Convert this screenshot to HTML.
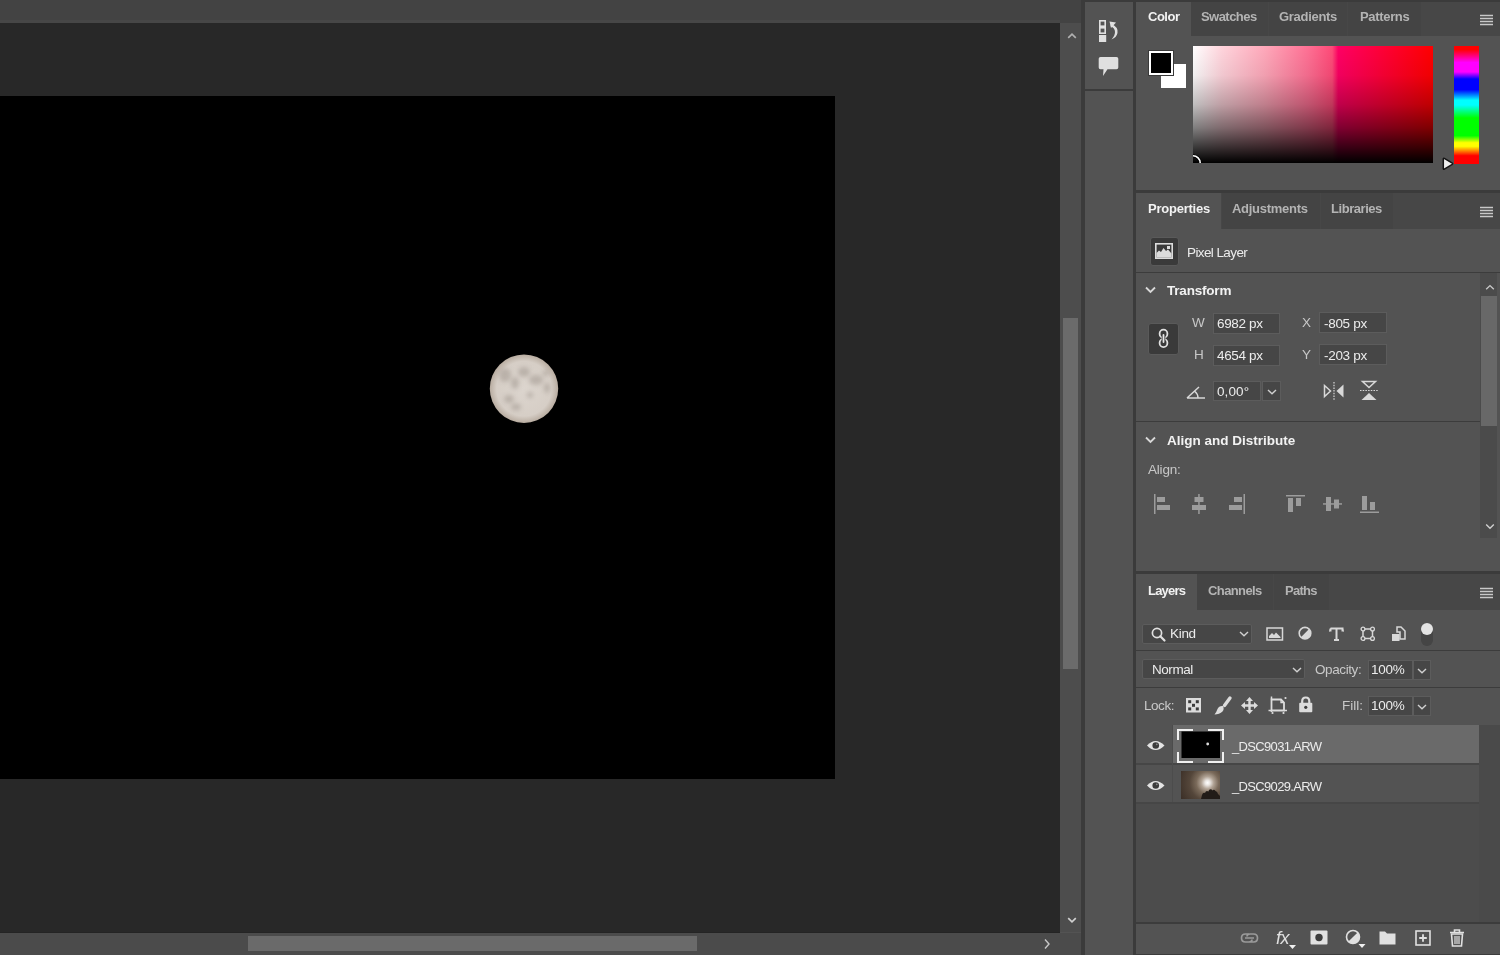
<!DOCTYPE html>
<html><head><meta charset="utf-8">
<style>
*{margin:0;padding:0;box-sizing:border-box}
html,body{width:1500px;height:955px;overflow:hidden;background:#535353;font-family:"Liberation Sans",sans-serif;}
.a{position:absolute}
.t{position:absolute;white-space:nowrap;line-height:1;font-size:13.5px;color:#ececec}
.hd{position:absolute;white-space:nowrap;line-height:1;font-size:13.5px;font-weight:bold;color:#f2f2f2}
.tab{position:absolute;white-space:nowrap;line-height:1;font-size:13px;letter-spacing:-0.25px;font-weight:bold;color:#b4b4b4}
.act{color:#f2f2f2}
.fld{position:absolute;background:#464646;border:1px solid #5c5c5c}
.ln{position:absolute;background:#3c3c3c}
svg{position:absolute;overflow:visible}
.t,.tab,.hd{will-change:transform}
</style></head><body>
<!-- ============ document area ============ -->
<div class="a" style="left:0;top:0;width:1081px;height:23px;background:#434343"></div><div class="a" style="left:0;top:20px;width:1060px;height:3px;background:#474747"></div>
<div class="a" style="left:0;top:23px;width:1060px;height:909px;background:#282828"></div>
<div class="a" style="left:0;top:96px;width:835px;height:683px;background:#000"></div>
<!-- moon -->
<svg style="left:480px;top:345px" width="88" height="88">
 <defs><filter id="bl" x="-50%" y="-50%" width="200%" height="200%"><feGaussianBlur stdDeviation="2.2"/></filter>
 <filter id="bl2"><feGaussianBlur stdDeviation="0.6"/></filter>
 <clipPath id="mc"><circle cx="44" cy="43.7" r="34.2"/></clipPath>
 <radialGradient id="mg" cx="50%" cy="50%" r="50%"><stop offset="0" stop-color="#dcd5ce"/><stop offset="0.8" stop-color="#d6cec6"/><stop offset="1" stop-color="#b8aca0"/></radialGradient></defs>
 <g filter="url(#bl2)">
 <circle cx="44" cy="43.7" r="34.2" fill="url(#mg)"/>
 <g clip-path="url(#mc)" filter="url(#bl)" fill="#a39a92" opacity="0.55">
  <ellipse cx="44" cy="27" rx="6" ry="5"/>
  <ellipse cx="56" cy="35" rx="7" ry="5"/>
  <ellipse cx="25" cy="30" rx="6" ry="7"/>
  <ellipse cx="35" cy="38" rx="4" ry="6"/>
  <ellipse cx="29" cy="54" rx="5" ry="4"/>
  <ellipse cx="36" cy="62" rx="5" ry="3.5"/>
  <ellipse cx="66" cy="28" rx="3" ry="3"/>
  <ellipse cx="67" cy="43" rx="3" ry="5"/>
  <ellipse cx="50" cy="50" rx="3" ry="3"/>
 </g>
 </g>
</svg>
<!-- vertical scrollbar -->
<div class="a" style="left:1060px;top:23px;width:21px;height:909px;background:#4d4d4d"></div>
<div class="a" style="left:1063px;top:318px;width:15px;height:351px;background:#6b6b6b"></div>
<!-- horizontal scrollbar -->
<div class="a" style="left:0;top:932px;width:1060px;height:1px;background:#242424"></div><div class="a" style="left:0;top:933px;width:1081px;height:22px;background:#4b4b4b"></div>
<div class="a" style="left:248px;top:936px;width:449px;height:15px;background:#6a6a6a"></div>
<!-- separators -->
<div class="a" style="left:1081px;top:0;width:4px;height:955px;background:#3b3b3b"></div>
<div class="a" style="left:1133px;top:0;width:3px;height:955px;background:#3b3b3b"></div>
<!-- toolbar column -->
<div class="a" style="left:1085px;top:0;width:48px;height:2px;background:#3b3b3b"></div>
<div class="a" style="left:1085px;top:89px;width:48px;height:2px;background:#3b3b3b"></div>

<!-- ============ right panels ============ -->
<div class="a" style="left:1136px;top:0;width:364px;height:2px;background:#3b3b3b"></div>
<!-- Color tab bar -->
<div class="a" style="left:1136px;top:2px;width:364px;height:34px;background:#474747"></div>
<div class="a" style="left:1136px;top:2px;width:55px;height:36px;background:#535353"></div>
<div class="a" style="left:1191px;top:2px;width:77px;height:34px;background:#444444"></div>
<div class="a" style="left:1269px;top:2px;width:78px;height:34px;background:#444444"></div>
<div class="a" style="left:1348px;top:2px;width:73px;height:34px;background:#444444"></div>
<span class="tab act" style="left:1148px;top:10px;letter-spacing:-0.5px">Color</span>
<span class="tab" style="left:1201px;top:10px;letter-spacing:-0.55px">Swatches</span>
<span class="tab" style="left:1279px;top:10px;letter-spacing:-0.3px">Gradients</span>
<span class="tab" style="left:1360px;top:10px;letter-spacing:-0.33px">Patterns</span>
<!-- Color section bottom -->
<div class="a" style="left:1136px;top:190px;width:364px;height:3px;background:#3b3b3b"></div>

<!-- Properties tab bar -->
<div class="a" style="left:1136px;top:193px;width:364px;height:36px;background:#474747"></div>
<div class="a" style="left:1136px;top:193px;width:85px;height:38px;background:#535353"></div>
<div class="a" style="left:1222px;top:193px;width:98px;height:36px;background:#444444"></div>
<div class="a" style="left:1321px;top:193px;width:72px;height:36px;background:#444444"></div>
<span class="tab act" style="left:1148px;top:202px;letter-spacing:-0.23px">Properties</span>
<span class="tab" style="left:1232px;top:202px;letter-spacing:-0.28px">Adjustments</span>
<span class="tab" style="left:1331px;top:202px;letter-spacing:-0.45px">Libraries</span>
<div class="ln" style="left:1136px;top:272px;width:364px;height:1px"></div>
<div class="ln" style="left:1136px;top:421px;width:344px;height:1px"></div>
<!-- align section bottom -->
<div class="a" style="left:1136px;top:571px;width:364px;height:3px;background:#3b3b3b"></div>

<!-- Layers tab bar -->
<div class="a" style="left:1136px;top:574px;width:364px;height:36px;background:#474747"></div>
<div class="a" style="left:1136px;top:574px;width:61px;height:38px;background:#535353"></div>
<div class="a" style="left:1197px;top:574px;width:76px;height:36px;background:#444444"></div>
<div class="a" style="left:1274px;top:574px;width:55px;height:36px;background:#444444"></div>
<span class="tab act" style="left:1148px;top:584px;letter-spacing:-0.8px">Layers</span>
<span class="tab" style="left:1208px;top:584px;letter-spacing:-0.6px">Channels</span>
<span class="tab" style="left:1285px;top:584px;letter-spacing:-0.75px">Paths</span>
<div class="ln" style="left:1136px;top:650px;width:364px;height:1px"></div>
<div class="ln" style="left:1136px;top:687px;width:364px;height:1px"></div>
<div class="ln" style="left:1136px;top:922px;width:364px;height:2px"></div><div class="ln" style="left:1136px;top:954px;width:364px;height:1px"></div>

<!-- ====== Color panel content ====== -->
<div class="a" style="left:1161px;top:64px;width:25px;height:24px;background:#fff"></div>
<div class="a" style="left:1148px;top:50px;width:26px;height:26px;background:#3a3a3a"></div>
<div class="a" style="left:1149px;top:51px;width:24px;height:24px;background:#fff"></div>
<div class="a" style="left:1151px;top:53px;width:20px;height:20px;background:#000"></div>
<div class="a" style="left:1193px;top:46px;width:240px;height:117px;background:linear-gradient(to bottom,rgba(0,0,0,0) 0%,rgba(0,0,0,0.06) 25%,rgba(0,0,0,0.25) 50%,rgba(0,0,0,0.5) 70%,rgba(0,0,0,0.75) 85%,#000 100%),linear-gradient(to right,#ffffff 0%,#ffd4dc 12%,#ffa8ba 30%,#ff7094 48%,#ff4a78 58%,#ff0064 60.5%,#ff0040 75%,#ff0000 100%)"></div>
<svg style="left:1193px;top:154px" width="10" height="9"><path d="M0 1.8 A7.2 7.2 0 0 1 7.2 9" stroke="#000" stroke-width="3" fill="none"/><path d="M0 1.8 A7.2 7.2 0 0 1 7.2 9" stroke="#fff" stroke-width="1.6" fill="none"/></svg>
<div class="a" style="left:1454px;top:46px;width:25px;height:118px;background:linear-gradient(to bottom,#ff0000 0%,#ff0000 3%,#ff00ff 14%,#ff00ff 22%,#0000ff 28%,#0000ff 37%,#00ffff 46%,#00ffff 50%,#00ff00 61%,#00ff00 76%,#ffff00 82%,#ffff00 85%,#ff8000 89%,#ff0000 93%,#ff0000 100%)"></div>
<svg style="left:1441px;top:156px" width="14" height="15"><path d="M2.3 3 Q2.3 2 3.3 2.4 L11.3 7.2 Q12 7.8 11.3 8.4 L3.3 13.2 Q2.3 13.6 2.3 12.6 Z" fill="#f0f0f0" stroke="#141414" stroke-width="1.5" stroke-linejoin="round"/></svg>
<!-- panel menus -->
<svg style="left:1480px;top:14px" width="13" height="12"><path d="M0 1.5H13M0 4.5H13M0 7.5H13M0 10.5H13" stroke="#c8c8c8" stroke-width="1.4"/></svg>
<svg style="left:1480px;top:206px" width="13" height="12"><path d="M0 1.5H13M0 4.5H13M0 7.5H13M0 10.5H13" stroke="#c8c8c8" stroke-width="1.4"/></svg>
<svg style="left:1480px;top:587px" width="13" height="12"><path d="M0 1.5H13M0 4.5H13M0 7.5H13M0 10.5H13" stroke="#c8c8c8" stroke-width="1.4"/></svg>

<!-- toolbar icons -->
<svg style="left:1098px;top:19px" width="22" height="24">
 <rect x="1.8" y="1.8" width="5.4" height="5.4" fill="none" stroke="#e0e0e0" stroke-width="1.6"/>
 <rect x="1.8" y="8.8" width="5.4" height="5.4" fill="none" stroke="#e0e0e0" stroke-width="1.6"/>
 <rect x="1" y="16" width="7.2" height="7" fill="#e0e0e0"/>
 <path d="M13.5 5 Q20.5 8 19.5 14 Q18.5 18.5 13.5 20.5 Q17 16.5 17 13 Q17 9 12.5 7Z" fill="#e0e0e0"/>
 <path d="M11.5 2.5 L18 3.5 L13 9 Z" fill="#e0e0e0"/>
</svg>
<svg style="left:1098px;top:56px" width="22" height="22"><path d="M2.5 1 H18.5 Q20.3 1 20.3 2.8 V11.5 Q20.3 13.3 18.5 13.3 H9.5 L5 20 L5.5 13.3 H2.5 Q0.7 13.3 0.7 11.5 V2.8 Q0.7 1 2.5 1Z" fill="#e0e0e0"/></svg>
<!-- doc scroll arrows -->
<svg style="left:1067px;top:32px" width="10" height="8"><path d="M1.2 5.8 L5 2.2 L8.8 5.8" stroke="#b0b0b0" stroke-width="1.7" fill="none"/></svg>
<svg style="left:1067px;top:916px" width="10" height="8"><path d="M1.2 2.2 L5 5.8 L8.8 2.2" stroke="#d0d0d0" stroke-width="1.7" fill="none"/></svg>
<svg style="left:1043px;top:938px" width="8" height="12"><path d="M2 1.5 L6 6 L2 10.5" stroke="#c8c8c8" stroke-width="1.4" fill="none"/></svg>

<!-- ====== Properties content ====== -->
<div class="a" style="left:1150px;top:237px;width:29px;height:29px;background:#3a3a3a;border:1px solid #5a5a5a;border-radius:3px"></div>
<svg style="left:1154px;top:242px" width="20" height="18">
 <rect x="1.8" y="1.8" width="16.4" height="14.4" fill="none" stroke="#dcdcdc" stroke-width="1.6"/>
 <path d="M2.5 15.5 L2.5 11 L5 8.5 L7 10 L9.5 6 L12 9 L14 7.5 L17.5 11.5 L17.5 15.5Z" fill="#dcdcdc"/>
 <rect x="13" y="4" width="3" height="3" fill="#dcdcdc"/>
</svg>
<span class="t" style="left:1187px;top:246px;letter-spacing:-0.6px">Pixel Layer</span>

<svg style="left:1145px;top:286px" width="12" height="9"><path d="M1 1.5 L5.5 6 L10 1.5" stroke="#d8d8d8" stroke-width="1.8" fill="none"/></svg>
<span class="hd" style="left:1167px;top:284px;letter-spacing:-0.2px">Transform</span>
<div class="a" style="left:1148px;top:323px;width:31px;height:32px;background:#3a3a3a;border:1px solid #5a5a5a;border-radius:3px"></div>
<svg style="left:1156px;top:327px" width="16" height="24"><ellipse cx="7.5" cy="6.8" rx="3.9" ry="4.1" fill="none" stroke="#e0e0e0" stroke-width="1.8"/><ellipse cx="7.5" cy="16" rx="3.9" ry="4.1" fill="none" stroke="#e0e0e0" stroke-width="1.8"/><path d="M7.5 7.5 V15.5" stroke="#3a3a3a" stroke-width="3.6"/><path d="M7.5 8 V15" stroke="#e8e8e8" stroke-width="1.8" stroke-linecap="round"/></svg>

<span class="t" style="left:1192px;top:316px;color:#c8c8c8">W</span>
<div class="fld" style="left:1213px;top:313px;width:67px;height:21px"></div>
<span class="t" style="left:1217px;top:317px;letter-spacing:-0.35px">6982 px</span>
<span class="t" style="left:1194px;top:348px;color:#c8c8c8">H</span>
<div class="fld" style="left:1213px;top:345px;width:67px;height:21px"></div>
<span class="t" style="left:1217px;top:349px;letter-spacing:-0.35px">4654 px</span>
<span class="t" style="left:1302px;top:316px;color:#c8c8c8">X</span>
<div class="fld" style="left:1319px;top:312px;width:68px;height:21px"></div>
<span class="t" style="left:1324px;top:317px;letter-spacing:-0.3px">-805 px</span>
<span class="t" style="left:1302px;top:348px;color:#c8c8c8">Y</span>
<div class="fld" style="left:1319px;top:344px;width:68px;height:21px"></div>
<span class="t" style="left:1324px;top:349px;letter-spacing:-0.3px">-203 px</span>

<svg style="left:1186px;top:385px" width="20" height="14"><path d="M1 13 H19 M1 13 L13 2 M12 13 Q12 9 9 6.5" stroke="#d8d8d8" stroke-width="1.5" fill="none"/></svg>
<div class="fld" style="left:1213px;top:381px;width:48px;height:20px"></div>
<div class="fld" style="left:1262px;top:381px;width:19px;height:20px"></div>
<span class="t" style="left:1217px;top:385px;letter-spacing:0.1px">0,00°</span>
<svg style="left:1266px;top:388px" width="12" height="8"><path d="M2 2 L6 5.8 L10 2" stroke="#d0d0d0" stroke-width="1.4" fill="none"/></svg>
<svg style="left:1323px;top:382px" width="22" height="18"><path d="M1.5 3.5 L7.5 9 L1.5 14.5Z" fill="none" stroke="#d8d8d8" stroke-width="1.5"/><path d="M20.5 2.5 L13.5 9 L20.5 15.5Z" fill="#d8d8d8"/><path d="M11 0 V18" stroke="#d8d8d8" stroke-width="1.2" stroke-dasharray="1.5 1.2"/></svg>
<svg style="left:1360px;top:380px" width="18" height="21"><path d="M2.5 1.5 H15.5 L9 7.5Z" fill="none" stroke="#d8d8d8" stroke-width="1.5"/><path d="M1.5 20 H16.5 L9 13Z" fill="#d8d8d8"/><path d="M0 10.5 H18" stroke="#d8d8d8" stroke-width="1.2" stroke-dasharray="1.5 1.2"/></svg>

<!-- panel scrollbar -->
<div class="a" style="left:1480px;top:273px;width:17px;height:265px;background:#4b4b4b"></div>
<div class="a" style="left:1481px;top:296px;width:16px;height:130px;background:#686868"></div>
<svg style="left:1485px;top:284px" width="10" height="7"><path d="M1.2 5.2 L5 1.6 L8.8 5.2" stroke="#c8c8c8" stroke-width="1.4" fill="none"/></svg>
<svg style="left:1485px;top:523px" width="10" height="7"><path d="M1.2 1.6 L5 5.2 L8.8 1.6" stroke="#d0d0d0" stroke-width="1.4" fill="none"/></svg>

<svg style="left:1145px;top:436px" width="12" height="9"><path d="M1 1.5 L5.5 6 L10 1.5" stroke="#d8d8d8" stroke-width="1.8" fill="none"/></svg>
<span class="hd" style="left:1167px;top:434px">Align and Distribute</span>
<span class="t" style="left:1148px;top:463px;color:#c8c8c8;letter-spacing:-0.2px">Align:</span>
<!-- align icons -->
<svg style="left:1153px;top:494px" width="18" height="20" fill="#9c9c9c"><rect x="1" y="0" width="1.5" height="20"/><rect x="4" y="3" width="8" height="5"/><rect x="4" y="11" width="13" height="5"/></svg>
<svg style="left:1191px;top:494px" width="16" height="20" fill="#9c9c9c"><rect x="7.2" y="0" width="1.5" height="20"/><rect x="3.5" y="3" width="9" height="5"/><rect x="1" y="11" width="14" height="5"/></svg>
<svg style="left:1228px;top:494px" width="18" height="20" fill="#9c9c9c"><rect x="15.5" y="0" width="1.5" height="20"/><rect x="6" y="3" width="8" height="5"/><rect x="1" y="11" width="13" height="5"/></svg>
<svg style="left:1286px;top:494px" width="20" height="20" fill="#9c9c9c"><rect x="0" y="1" width="19" height="1.5"/><rect x="2" y="4" width="5" height="14"/><rect x="10" y="4" width="5" height="8"/></svg>
<svg style="left:1323px;top:494px" width="20" height="20" fill="#9c9c9c"><rect x="0" y="9.2" width="19" height="1.5"/><rect x="3" y="3" width="5" height="14"/><rect x="11" y="5.5" width="5" height="9"/></svg>
<svg style="left:1360px;top:494px" width="20" height="20" fill="#9c9c9c"><rect x="0" y="17.5" width="19" height="1.5"/><rect x="2" y="2" width="5" height="14"/><rect x="10" y="8" width="5" height="8"/></svg>


<!-- ====== Layers content ====== -->
<div class="fld" style="left:1142px;top:624px;width:110px;height:20px;border-radius:2px"></div>
<svg style="left:1151px;top:627px" width="15" height="15"><circle cx="6" cy="6" r="4.6" fill="none" stroke="#e0e0e0" stroke-width="1.7"/><path d="M9.3 9.3 L13.5 13.5" stroke="#e0e0e0" stroke-width="2.2" stroke-linecap="round"/></svg>
<span class="t" style="left:1170px;top:627px;letter-spacing:-0.3px">Kind</span>
<svg style="left:1238px;top:630px" width="12" height="8"><path d="M2 2 L6 5.8 L10 2" stroke="#d0d0d0" stroke-width="1.4" fill="none"/></svg>
<!-- filter icons -->
<svg style="left:1266px;top:627px" width="18" height="14"><rect x="1" y="1" width="15.5" height="12" fill="none" stroke="#d8d8d8" stroke-width="1.5"/><path d="M3 11 L3 9 L6 6 L8 8 L10 5.5 L14.5 10 L14.5 11Z" fill="#d8d8d8"/></svg>
<svg style="left:1298px;top:626px" width="15" height="15"><circle cx="7" cy="7.2" r="5.8" fill="none" stroke="#d8d8d8" stroke-width="1.6"/><path d="M11.1 3.1 A5.8 5.8 0 0 1 2.9 11.3Z" fill="#d8d8d8"/></svg>
<svg style="left:1329px;top:627px" width="15" height="15"><path d="M1.5 1.5 H13.5 V4.5 M1.5 1.5 V4.5 M7.5 1.5 V13 M5 13 H10" stroke="#d8d8d8" stroke-width="2" fill="none"/><path d="M1.5 1.5 L0.5 4.5 M13.5 1.5 L14.5 4.5" stroke="#d8d8d8" stroke-width="1"/></svg>
<svg style="left:1360px;top:626px" width="16" height="16"><rect x="3" y="3" width="9.5" height="9.5" fill="none" stroke="#d8d8d8" stroke-width="1.5"/><circle cx="3" cy="3" r="1.9" fill="#535353" stroke="#d8d8d8" stroke-width="1.3"/><circle cx="12.5" cy="3" r="1.9" fill="#535353" stroke="#d8d8d8" stroke-width="1.3"/><circle cx="3" cy="12.5" r="1.9" fill="#535353" stroke="#d8d8d8" stroke-width="1.3"/><circle cx="12.5" cy="12.5" r="1.9" fill="#535353" stroke="#d8d8d8" stroke-width="1.3"/></svg>
<svg style="left:1391px;top:626px" width="15" height="16"><path d="M6 1 H10 L14 5 V13 H9 V6 H6Z" fill="none" stroke="#d8d8d8" stroke-width="1.5"/><rect x="1" y="8" width="7.5" height="7" fill="#d8d8d8"/></svg>
<div class="a" style="left:1421px;top:623px;width:12px;height:23px;border-radius:6px;background:#454545"></div>
<div class="a" style="left:1421px;top:623px;width:12px;height:12px;border-radius:50%;background:#e4e4e4"></div>

<div class="fld" style="left:1142px;top:659px;width:163px;height:20px;border-radius:2px"></div>
<span class="t" style="left:1152px;top:663px;letter-spacing:-0.45px">Normal</span>
<svg style="left:1291px;top:666px" width="12" height="8"><path d="M2 2 L6 5.8 L10 2" stroke="#d0d0d0" stroke-width="1.4" fill="none"/></svg>
<span class="t" style="left:1315px;top:663px;color:#c8c8c8;letter-spacing:-0.4px">Opacity:</span>
<div class="fld" style="left:1368px;top:660px;width:45px;height:20px"></div>
<div class="fld" style="left:1413px;top:660px;width:18px;height:20px"></div>
<span class="t" style="left:1371px;top:663px;letter-spacing:-0.25px">100%</span>
<svg style="left:1416px;top:667px" width="12" height="8"><path d="M2 2 L6 5.8 L10 2" stroke="#d0d0d0" stroke-width="1.4" fill="none"/></svg>

<span class="t" style="left:1144px;top:699px;color:#c8c8c8;letter-spacing:-0.45px">Lock:</span>
<svg style="left:1186px;top:698px" width="15" height="15"><rect x="0" y="0" width="15" height="14.5" fill="#dcdcdc"/><rect x="2.2" y="2.2" width="3" height="3" fill="#3a3a3a"/><rect x="9.8" y="2.2" width="3" height="3" fill="#3a3a3a"/><rect x="6" y="5.8" width="3" height="3" fill="#3a3a3a"/><rect x="2.2" y="9.4" width="3" height="3" fill="#3a3a3a"/><rect x="9.8" y="9.4" width="3" height="3" fill="#3a3a3a"/></svg>
<svg style="left:1214px;top:696px" width="18" height="19"><path d="M16 2 L10.5 9.5" stroke="#dcdcdc" stroke-width="3.4" stroke-linecap="round"/><path d="M9 10 Q5 9.5 3.5 13 Q2.5 16 0.5 18.5 Q5.5 18.5 8.5 15.5 Q10.5 13 9 10Z" fill="#dcdcdc"/></svg>
<svg style="left:1241px;top:697px" width="17" height="17"><path d="M8.5 2 V15 M2 8.5 H15" stroke="#dcdcdc" stroke-width="2.4"/><path d="M8.5 0 L12 4 H5Z M8.5 17 L12 13 H5Z M0 8.5 L4 5 V12Z M17 8.5 L13 5 V12Z" fill="#dcdcdc"/></svg>
<svg style="left:1268px;top:696px" width="20" height="18"><path d="M3.5 3.5 H13 L16 6.5 V14.5 H3.5 Z" fill="none" stroke="#dcdcdc" stroke-width="1.8"/><path d="M13 3.5 V6.5 H16" fill="none" stroke="#dcdcdc" stroke-width="1.3"/><path d="M3.5 0.5 V3.5 M0.5 14.5 H3.5 M16 14.5 H19 M3.5 14.5 V16" stroke="#dcdcdc" stroke-width="1.5"/><circle cx="17.5" cy="2" r="1.1" fill="#dcdcdc"/><circle cx="4.5" cy="17" r="1.1" fill="#dcdcdc"/><circle cx="15.5" cy="17" r="1.1" fill="#dcdcdc"/></svg>
<svg style="left:1298px;top:696px" width="16" height="17"><path d="M4.2 7.5 V5.2 Q4.2 1.5 7.75 1.5 Q11.3 1.5 11.3 5.2 V7.5" fill="none" stroke="#dcdcdc" stroke-width="2.2"/><rect x="1.2" y="6.8" width="13.1" height="9.5" rx="1" fill="#dcdcdc"/><circle cx="7.75" cy="11.3" r="1.6" fill="#3a3a3a"/></svg>
<span class="t" style="left:1342px;top:699px;color:#c8c8c8">Fill:</span>
<div class="fld" style="left:1368px;top:696px;width:45px;height:20px"></div>
<div class="fld" style="left:1413px;top:696px;width:18px;height:20px"></div>
<span class="t" style="left:1371px;top:699px;letter-spacing:-0.25px">100%</span>
<svg style="left:1416px;top:703px" width="12" height="8"><path d="M2 2 L6 5.8 L10 2" stroke="#d0d0d0" stroke-width="1.4" fill="none"/></svg>

<!-- layer rows -->
<div class="a" style="left:1136px;top:725px;width:364px;height:197px;background:#4c4c4c"></div>
<div class="a" style="left:1479px;top:725px;width:21px;height:197px;background:#4a4a4a"></div>
<div class="a" style="left:1136px;top:725px;width:343px;height:39px;background:#535353"></div>
<div class="a" style="left:1173px;top:725px;width:306px;height:39px;background:#6a6a6a"></div>
<div class="a" style="left:1136px;top:765px;width:343px;height:37px;background:#535353"></div>
<div class="ln" style="left:1136px;top:763px;width:343px;height:2px;background:#464646"></div>
<div class="ln" style="left:1136px;top:802px;width:343px;height:2px;background:#464646"></div>
<div class="ln" style="left:1172px;top:725px;width:1px;height:77px;background:#4c4c4c"></div>
<svg style="left:1146px;top:739px" width="20" height="13"><path d="M1 6.5 Q9.5 -2.5 18.5 6.5 Q9.5 15.5 1 6.5Z" fill="#e4e4e4"/><circle cx="9.75" cy="6.5" r="3.3" fill="#3c3c3c"/><circle cx="10.8" cy="5.3" r="0.9" fill="#888"/></svg>
<svg style="left:1146px;top:779px" width="20" height="13"><path d="M1 6.5 Q9.5 -2.5 18.5 6.5 Q9.5 15.5 1 6.5Z" fill="#e4e4e4"/><circle cx="9.75" cy="6.5" r="3.3" fill="#3c3c3c"/><circle cx="10.8" cy="5.3" r="0.9" fill="#888"/></svg>
<!-- thumb 1 -->
<svg style="left:1177px;top:729px" width="47" height="34">
 <rect x="4.5" y="2.5" width="38.5" height="26.5" fill="#000"/>
 <path d="M1 11 V1 H16 M31 1 H46 V11 M46 23 V33 H31 M16 33 H1 V23" stroke="#f0f0f0" stroke-width="2" fill="none"/>
 <circle cx="30.7" cy="15" r="1.4" fill="#ddd"/>
</svg>
<span class="t" style="left:1232px;top:740px;font-size:13px;letter-spacing:-0.66px">_DSC9031.ARW</span>
<!-- thumb 2 -->
<div class="a" style="left:1181px;top:771px;width:39px;height:28px;background:radial-gradient(circle at 68% 42%,#ffffff 0%,#eae6e2 8%,#b0a294 20%,#7a6a5a 36%,#54463a 58%,#3a2e26 100%)"></div>
<svg style="left:1181px;top:771px" width="39" height="28"><g fill="#221c18"><path d="M20 28 L21 24 Q22 21 24 22 Q25 19 27.5 20.5 L28 19 Q30 17.5 31.5 19.5 Q33 18 34.5 20 Q36.5 20.5 37 23 L39 25 V28Z"/></g></svg>
<span class="t" style="left:1232px;top:780px;font-size:13px;letter-spacing:-0.66px">_DSC9029.ARW</span>

<!-- bottom bar icons -->
<svg style="left:1240px;top:932px" width="19" height="12"><path d="M9 2 H5.5 Q1.5 2 1.5 6 Q1.5 10 5.5 10 H9 Q12 10 12 7.5 M10 2 H13.5 Q17.5 2 17.5 6 Q17.5 10 13.5 10 H10 M7 4.5 Q7 2 10 2 M5 6 H14" stroke="#9a9a9a" stroke-width="1.7" fill="none"/></svg>
<span class="t" style="left:1276px;top:929px;font-style:italic;font-size:18px;letter-spacing:-0.5px;color:#e0e0e0">fx</span>
<svg style="left:1289px;top:945px" width="8" height="5"><path d="M0 0 H7 L3.5 4Z" fill="#f0f0f0"/></svg>
<svg style="left:1310px;top:930px" width="18" height="15"><rect x="0.5" y="0.5" width="17" height="14" rx="1" fill="#e0e0e0"/><circle cx="9" cy="7.5" r="3.7" fill="#3c3c3c"/></svg>
<svg style="left:1345px;top:929px" width="22" height="20"><circle cx="8" cy="8" r="6.5" fill="none" stroke="#e0e0e0" stroke-width="1.6"/><path d="M12.6 3.4 A6.5 6.5 0 0 1 3.4 12.6Z" fill="#e0e0e0"/><path d="M13.5 15 H20.5 L17 19Z" fill="#f0f0f0"/></svg>
<svg style="left:1379px;top:930px" width="17" height="15"><path d="M0.5 1.5 H6 L8 3.5 H16.5 V14.5 H0.5Z" fill="#e0e0e0"/></svg>
<svg style="left:1415px;top:930px" width="16" height="16"><rect x="1" y="1" width="14" height="14" fill="none" stroke="#e0e0e0" stroke-width="1.6"/><path d="M8 4.2 V11.8 M4.2 8 H11.8" stroke="#e0e0e0" stroke-width="1.8"/></svg>
<svg style="left:1449px;top:929px" width="16" height="18"><path d="M1 3.5 H15 M5.5 3.5 V1 H10.5 V3.5" stroke="#e0e0e0" stroke-width="1.6" fill="none"/><path d="M2.5 5 H13.5 L12.5 17 H3.5Z" fill="none" stroke="#e0e0e0" stroke-width="1.6"/><path d="M6 7 V15 M8 7 V15 M10 7 V15" stroke="#e0e0e0" stroke-width="1.2"/></svg>

</body></html>
